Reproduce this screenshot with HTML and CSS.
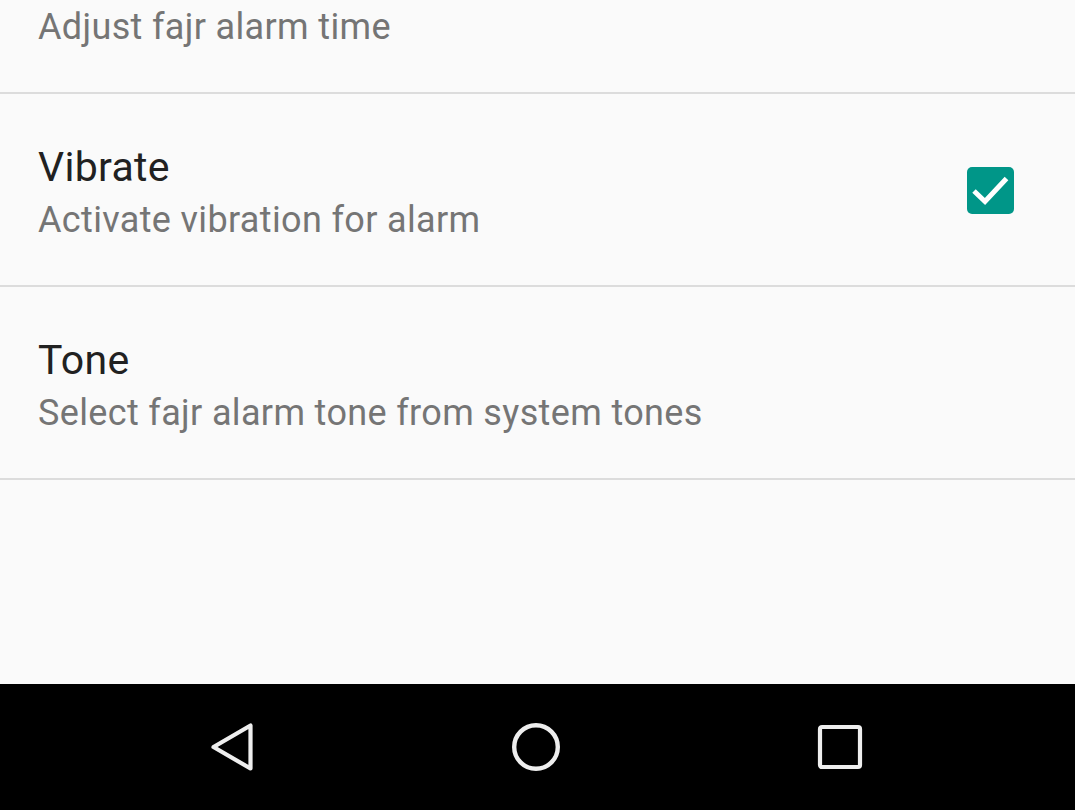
FILE: index.html
```html
<!DOCTYPE html>
<html lang="en">
<head>
<meta charset="utf-8">
<title>Fajr alarm settings</title>
<link rel="stylesheet" href="styles.css">
</head>
<body>
<div class="screen">
  <main class="prefs">
    <ul class="pref-list">
      <li class="pref pref-first">
        <div class="pref-text">
          <div class="pref-summary">Adjust fajr alarm time</div>
        </div>
      </li>
      <li class="pref">
        <div class="pref-text">
          <div class="pref-title">Vibrate</div>
          <div class="pref-summary">Activate vibration for alarm</div>
        </div>
        <span class="checkbox" role="checkbox" aria-checked="true">
          <svg viewBox="0 0 47 47" width="47" height="47" aria-hidden="true">
            <rect x="0" y="0" width="47" height="47" rx="5" fill="#009688"/>
            <path d="M7 24 L18 34.5 L39.5 11.5" fill="none" stroke="#ffffff" stroke-width="5" stroke-linecap="butt" stroke-linejoin="miter"/>
          </svg>
        </span>
      </li>
      <li class="pref">
        <div class="pref-text">
          <div class="pref-title">Tone</div>
          <div class="pref-summary">Select fajr alarm tone from system tones</div>
        </div>
      </li>
    </ul>
  </main>
  <nav class="navbar">
    <button class="nav-btn" aria-label="Back">
      <svg viewBox="0 0 48 48" width="48" height="48">
        <path d="M5.5 24 L42.5 2.5 L42.5 45.5 Z" fill="none" stroke="#eeeeee" stroke-width="4.2" stroke-linejoin="round"/>
      </svg>
    </button>
    <button class="nav-btn" aria-label="Home">
      <svg viewBox="0 0 48 48" width="48" height="48">
        <circle cx="24" cy="24" r="21.8" fill="none" stroke="#eeeeee" stroke-width="4.4"/>
      </svg>
    </button>
    <button class="nav-btn" aria-label="Recents">
      <svg viewBox="0 0 48 48" width="48" height="48">
        <rect x="4" y="4" width="40" height="40" rx="2" fill="none" stroke="#eeeeee" stroke-width="4.2"/>
      </svg>
    </button>
  </nav>
</div>
</body>
</html>
```
FILE: styles.css
```css
html, body {
  margin: 0;
  padding: 0;
  background: #fafafa;
}

.screen {
  width: 1075px;
  height: 810px;
  display: flex;
  flex-direction: column;
  overflow: hidden;
  font-family: Roboto, "Noto Sans", "Liberation Sans", sans-serif;
}

.prefs {
  flex: 1;
  overflow: hidden;
  background: #fafafa;
}

.pref-list {
  list-style: none;
  margin: 0;
  padding: 0;
}

.pref {
  display: flex;
  align-items: center;
  padding: 49px 61px 36px 38px;
  height: 106px;
  border-bottom: 2px solid #dcdcdc;
}

.pref-first {
  margin-top: -2px;
  padding-top: 0;
  padding-bottom: 37px;
  height: 57px;
}

.pref-text {
  flex: 1;
}

.pref-title {
  font-size: 41px;
  line-height: 48px;
  letter-spacing: 0.3px;
  color: #212121;
}

.pref-summary {
  font-size: 36px;
  line-height: 58px;
  letter-spacing: 0.35px;
  color: #757575;
}

.checkbox {
  display: block;
  width: 47px;
  height: 47px;
  margin-top: -11px;
}

.checkbox svg {
  display: block;
}

.navbar {
  height: 126px;
  flex: 0 0 126px;
  background: #000000;
  display: flex;
  align-items: center;
  justify-content: center;
  gap: 204px;
  padding-right: 4px;
}

.nav-btn {
  width: 100px;
  height: 60px;
  border: 0;
  padding: 0;
  background: transparent;
  display: flex;
  align-items: center;
  justify-content: center;
}

.nav-btn svg {
  display: block;
}
```
